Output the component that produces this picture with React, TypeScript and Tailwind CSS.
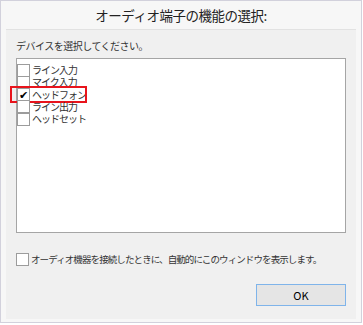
import { useState } from "react";

const devices = ["ライン入力", "マイク入力", "ヘッドフォン", "ライン出力", "ヘッドセット"];

function Box({ checked }: { checked: boolean }) {
  return (
    <span className="flex h-[13px] w-[13px] shrink-0 items-center justify-center border border-[#9c9c9c] bg-white text-[11px] leading-none text-black">
      {checked ? "✔" : ""}
    </span>
  );
}

export default function App() {
  const [selected, setSelected] = useState("ヘッドフォン");
  const [auto, setAuto] = useState(false);

  return (
    <div
      className="h-[325px] w-[363px] bg-white text-[#333]"
      style={{ fontFamily: '"Noto Sans CJK JP", "Noto Sans", sans-serif' }}
    >
      <div className="flex h-[323px] w-[362px] flex-col border border-[#d2d1dc] bg-[#f7f7f7]">
        <div className="flex h-[28px] items-center justify-center text-[13.5px] tracking-[-0.5px] text-[#222]">
          オーディオ端子の機能の選択:
        </div>

        <div className="mx-[5px] mb-[3px] flex flex-1 flex-col border-t border-[#e2e2e2] bg-[#f0f0f0] px-[10px]">
          <p className="mt-[10px] text-[10px] leading-[12px] tracking-[-0.5px]">
            デバイスを選択してください。
          </p>

          <div className="mt-[6px] h-[175px] border border-[#a5a5a5] bg-white pt-[5px]">
            {devices.map((d) => (
              <div
                key={d}
                className="relative flex h-[12.25px] cursor-default items-center gap-[2px]"
                onClick={() => setSelected(d)}
              >
                <Box checked={selected === d} />
                <span className="text-[10px] leading-none tracking-[-1px] text-[#333]">{d}</span>
                {selected === d && (
                  <span className="absolute left-[-7px] top-[-3px] h-[17px] w-[77px] border-2 border-[#e8141c]" />
                )}
              </div>
            ))}
          </div>

          <label className="mt-[20px] flex items-center gap-[2px]" onClick={() => setAuto(!auto)}>
            <Box checked={auto} />
            <span className="text-[9.5px] leading-none tracking-[-0.9px] text-[#333]">
              オーディオ機器を接続したときに、自動的にこのウィンドウを表示します。
            </span>
          </label>

          <div className="mt-[18px] flex justify-end">
            <button className="h-[22px] w-[90px] border border-[#7fb4ea] bg-[#e5e5e5] text-[11px] text-black">
              OK
            </button>
          </div>
        </div>
      </div>
    </div>
  );
}
